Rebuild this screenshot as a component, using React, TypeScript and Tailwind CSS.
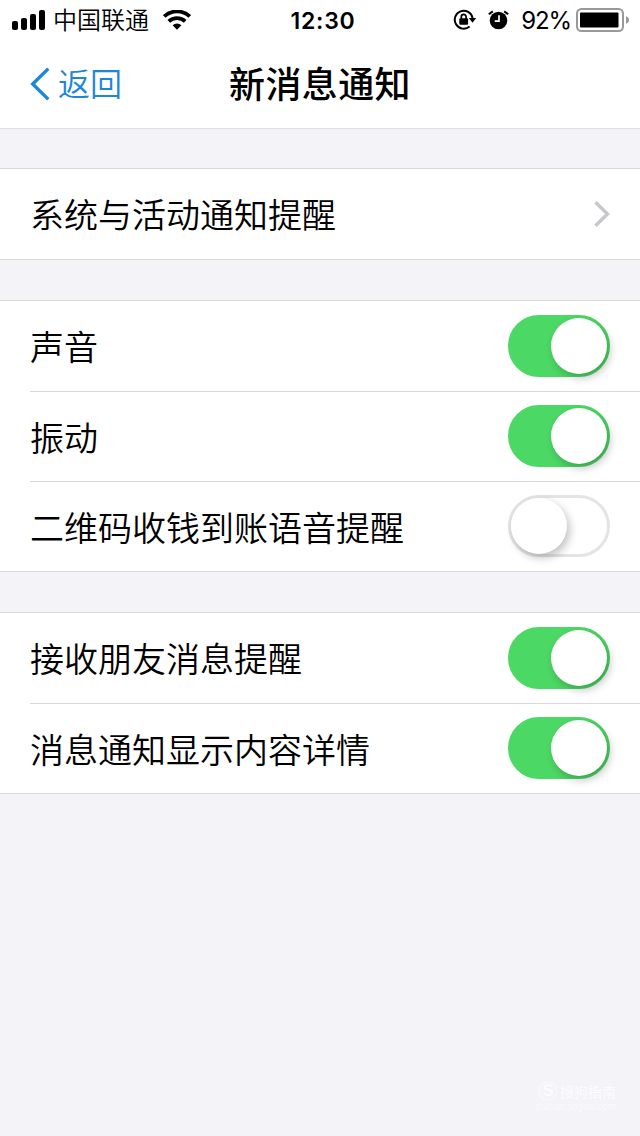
import { useState } from "react";

const groups = [
  [{ label: "系统与活动通知提醒", link: true }],
  [
    { label: "声音", on: true },
    { label: "振动", on: true },
    { label: "二维码收钱到账语音提醒", on: false },
  ],
  [
    { label: "接收朋友消息提醒", on: true },
    { label: "消息通知显示内容详情", on: true },
  ],
];

function StatusBar() {
  return (
    <div className="grid h-10 grid-cols-[1fr_auto_1fr] items-center text-black">
      <div className="flex items-center pl-3">
        <svg width="33" height="20" viewBox="0 0 33 20" fill="currentColor" aria-hidden="true">
          <rect x="0" y="11" width="6" height="9" rx="2" />
          <rect x="9" y="8" width="6" height="12" rx="2" />
          <rect x="18" y="4" width="6" height="16" rx="2" />
          <rect x="27" y="0" width="6" height="20" rx="2" />
        </svg>
        <span className="ml-2 pb-0.5 text-[24px] leading-[38px] font-[350]">中国联通</span>
        <svg width="28" height="20" viewBox="0 0 28 20" className="ml-3.5" fill="none" stroke="currentColor" strokeWidth="3.8" aria-hidden="true">
          <path d="M1.3 6.5a18.4 18.4 0 0 1 25.4 0" />
          <path d="M5.8 11.4a12 12 0 0 1 16.4 0" />
          <path d="M9.6 15.2a6.4 6.4 0 0 1 8.8 0L14 19.8z" fill="currentColor" stroke="none" />
        </svg>
      </div>

      <span className="pt-0.5 pl-1.5 font-['Inter',sans-serif] text-[23px] leading-[38px] font-semibold tracking-[0.8px]">12:30</span>

      <div className="flex items-center justify-end pr-[11px]">
        {/* Rotation lock */}
        <svg width="24" height="22" viewBox="0 0 24 22" fill="none" stroke="currentColor" aria-hidden="true">
          <path d="M16.6 17.6A9 9 0 1 1 19.6 9" strokeWidth="2" />
          <path d="M15.8 9h7.4l-3.7 4.8z" fill="currentColor" stroke="none" />
          <rect x="6.3" y="9.2" width="8.8" height="6.6" rx="1" fill="currentColor" stroke="none" />
          <path d="M8.3 10V7.8a2.4 2.4 0 0 1 4.8 0V10" strokeWidth="1.7" />
        </svg>
        {/* Alarm */}
        <svg width="21" height="20" viewBox="0 0 21 20" className="ml-[11px]" fill="none" stroke="currentColor" aria-hidden="true">
          <circle cx="10.5" cy="10.5" r="8.8" fill="currentColor" stroke="none" />
          <path d="M1 4.4A10 10 0 0 1 4.8 1.4M20 4.4a10 10 0 0 0-3.8-3" strokeWidth="2.2" />
          <path d="M11 5.2v6H6.8" stroke="white" strokeWidth="1.7" />
        </svg>
        <span className="ml-3 pt-0.5 font-['Inter',sans-serif] text-[24px] leading-[38px] tracking-[-1.1px]">92%</span>
        <svg width="53" height="24" viewBox="0 0 53 24" className="ml-[5px]" aria-hidden="true">
          <rect x="1" y="1" width="46" height="22" rx="4.5" fill="none" stroke="#999" strokeWidth="2" />
          <rect x="4" y="4.5" width="38.5" height="15" rx="1" fill="currentColor" />
          <path d="M50 8.3c4 1 4 6.4 0 7.4z" fill="#999" />
        </svg>
      </div>
    </div>
  );
}

function Header() {
  return (
    <header className="border-b border-[#dedee3] bg-white">
      <StatusBar />
      <div className="grid h-22 grid-cols-[1fr_auto_1fr] items-center">
        <button className="flex items-center pl-[30px] text-[#1c86d9]">
          <svg width="20" height="34" viewBox="0 0 20 34" fill="none" stroke="currentColor" strokeWidth="3.4" aria-hidden="true">
            <path d="M18.3 1.6L2.7 17l15.6 15.4" />
          </svg>
          <span className="ml-2 pb-[5px] text-[32px] leading-none font-[350]">返回</span>
        </button>
        <h1 className="pb-[5px] text-[36px] leading-none font-medium tracking-[0.4px]">新消息通知</h1>
      </div>
    </header>
  );
}

function Toggle({ label, defaultOn }: { label: string; defaultOn: boolean }) {
  const [on, setOn] = useState(defaultOn);

  return (
    <button
      role="switch"
      aria-checked={on}
      aria-label={label}
      onClick={() => setOn(!on)}
      className={`flex h-[62px] w-[102px] rounded-full border-[3px] ${
        on ? "justify-end border-[#4cd864] bg-[#4cd864]" : "justify-start border-[#e4e4e4] bg-white"
      }`}
    >
      <span className="h-14 w-14 rounded-full bg-white shadow-[3px_4px_8px_rgba(0,0,0,0.24)]" />
    </button>
  );
}

export default function App() {
  return (
    <div className="min-h-screen bg-[#f3f3f8] font-['Noto_Sans_CJK_SC',sans-serif] text-black">
      <Header />

      <main className="flex h-[1007px] flex-col pt-[39px]">
        <div className="flex flex-col gap-10">
          {groups.map((rows, i) => (
            <section key={i} className="border-y border-[#d9d9dc] bg-white pl-[30px]">
              {rows.map((row, j) => (
                <div
                  key={row.label}
                  className={`flex h-[90px] items-center justify-between pr-[30px] ${j > 0 ? "border-t border-[#d9d9dc] pb-px" : ""}`}
                >
                  <span className={`text-[34px] leading-none font-[350] ${j > 0 ? "pt-px" : ""}`}>{row.label}</span>
                  {"link" in row ? (
                    <svg width="16" height="26" viewBox="0 0 16 26" fill="none" stroke="#c7c7cc" strokeWidth="3.4" aria-hidden="true">
                      <path d="M1.5 1.2L13.5 13l-12 11.8" />
                    </svg>
                  ) : (
                    <Toggle label={row.label} defaultOn={row.on} />
                  )}
                </div>
              ))}
            </section>
          ))}
        </div>

        {/* Watermark */}
        <div className="mt-auto mb-[23px] flex flex-col items-end pr-6 text-[#fcfcfe]">
          <div className="flex items-center gap-0.5">
            <span className="flex h-5 w-5 items-center justify-center rounded-full border-2 border-[#f8f8fb] font-['Liberation_Sans',sans-serif] text-[16px] font-bold">
              S
            </span>
            <span className="text-[14px] leading-5">搜狗指南</span>
          </div>
          <span className="font-['Liberation_Sans',sans-serif] text-[10px] leading-3 text-[#fafafc]">zhinan.sogou.com</span>
        </div>
      </main>
    </div>
  );
}
